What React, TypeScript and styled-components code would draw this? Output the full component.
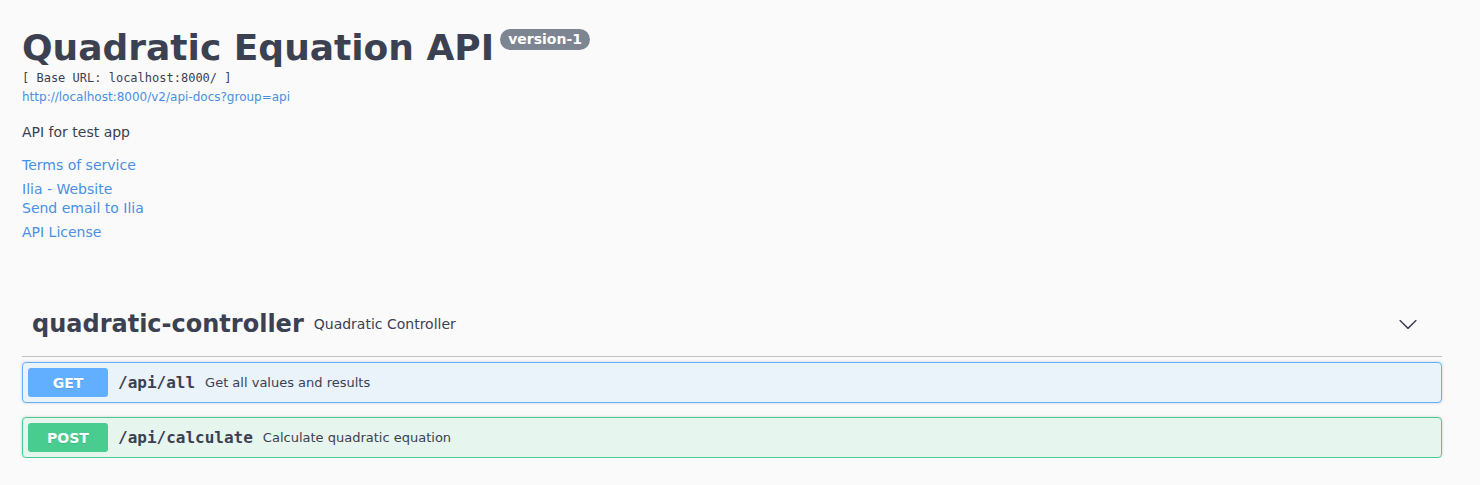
import React from "react";
import styled, { createGlobalStyle } from "styled-components";

const GlobalStyle = createGlobalStyle`
  html, body { margin: 0; padding: 0; background: #fafafa; }
  body { font-family: "DejaVu Sans", sans-serif; color: #3b4151; }
  * { box-sizing: border-box; }
`;

const Wrapper = styled.div`
  width: 1420px;
  margin-left: 22px;
  padding-top: 27px;
`;

const Info = styled.section`
  display: flex;
  flex-direction: column;
  align-items: flex-start;
`;

const TitleRow = styled.div`
  display: flex;
  align-items: flex-start;
`;

const Title = styled.h2`
  margin: 0;
  font-size: 36px;
  line-height: 42px;
  font-weight: 700;
  color: #3b4151;
  font-family: "DejaVu Sans", sans-serif;
`;

const Version = styled.small`
  display: inline-flex;
  align-items: center;
  height: 21px;
  margin: 2px 0 0 6px;
  padding: 0 8px;
  border-radius: 57px;
  background: #7d8492;
  color: #fff;
  font-size: 14px;
  line-height: 17px;
  font-weight: 700;
`;

const BaseUrl = styled.div`
  margin-top: 2px;
  font-family: "DejaVu Sans Mono", monospace;
  font-size: 12px;
  line-height: 14px;
  color: #3b4151;
`;

const Link = styled.a<{ $size?: number; $mt?: number; $lh?: number }>`
  display: block;
  margin-top: ${(p) => p.$mt ?? 0}px;
  font-size: ${(p) => p.$size ?? 14}px;
  line-height: ${(p) => p.$lh ?? 20}px;
  color: #4990e2;
  text-decoration: none;
  font-family: "DejaVu Sans", sans-serif;
`;

const Description = styled.p`
  margin: 18px 0 0;
  font-size: 14px;
  line-height: 20px;
`;

const TagSection = styled.div`
  margin-top: 59px;
`;

const Tag = styled.div`
  display: flex;
  align-items: center;
  padding: 8px 24px 17px 10px;
  border-bottom: 1px solid rgba(59, 65, 81, 0.3);
`;

const TagName = styled.h3`
  margin: 0;
  font-size: 24px;
  line-height: 30px;
  font-weight: 700;
  color: #3b4151;
`;

const TagDesc = styled.small`
  flex: 1;
  margin-left: 10px;
  font-size: 14px;
  line-height: 20px;
  color: #3b4151;
`;

const Arrow = styled.svg`
  width: 20px;
  height: 20px;
  fill: #3b4151;
`;

const Ops = styled.div`
  display: flex;
  flex-direction: column;
  gap: 14px;
  margin-top: 5px;
`;

const Op = styled.div<{ $color: string; $bg: string }>`
  display: flex;
  align-items: center;
  padding: 5px;
  border: 1px solid ${(p) => p.$color};
  background: ${(p) => p.$bg};
  border-radius: 4px;
  box-shadow: 0 0 3px rgba(0, 0, 0, 0.19);
`;

const Method = styled.span<{ $color: string }>`
  width: 80px;
  height: 29px;
  display: flex;
  align-items: center;
  justify-content: center;
  border-radius: 3px;
  background: ${(p) => p.$color};
  color: #fff;
  font-size: 14px;
  font-weight: 700;
  text-shadow: 0 1px 0 rgba(0, 0, 0, 0.1);
`;

const Path = styled.span`
  padding: 0 10px;
  font-family: "DejaVu Sans Mono", monospace;
  font-size: 16px;
  font-weight: 700;
  color: #3b4151;
`;

const OpDesc = styled.span`
  font-size: 13px;
  color: #3b4151;
`;

export default function App() {
  return (
    <>
      <GlobalStyle />
      <Wrapper>
        <Info>
          <TitleRow>
            <Title>Quadratic Equation API</Title>
            <Version>version-1</Version>
          </TitleRow>
          <BaseUrl>[ Base URL: localhost:8000/ ]</BaseUrl>
          <Link $size={12} $lh={14} $mt={5} href="#">
            http://localhost:8000/v2/api-docs?group=api
          </Link>
          <Description>API for test app</Description>
          <Link $mt={13} href="#">Terms of service</Link>
          <Link $mt={5} $lh={18} href="#">Ilia - Website</Link>
          <Link $lh={20} href="#">Send email to Ilia</Link>
          <Link $mt={4} href="#">API License</Link>
        </Info>
        <TagSection>
          <Tag>
            <TagName>quadratic-controller</TagName>
            <TagDesc>Quadratic Controller</TagDesc>
            <Arrow viewBox="0 0 20 20">
              <path d="M17.418 6.109c.272-.268.709-.268.979 0s.271.701 0 .969l-7.908 7.83c-.27.268-.707.268-.979 0l-7.908-7.83c-.27-.268-.27-.701 0-.969.271-.268.709-.268.979 0L10 13.25l7.418-7.141z" />
            </Arrow>
          </Tag>
          <Ops>
            <Op $color="#61affe" $bg="rgba(97,175,254,.1)">
              <Method $color="#61affe">GET</Method>
              <Path>/api/all</Path>
              <OpDesc>Get all values and results</OpDesc>
            </Op>
            <Op $color="#49cc90" $bg="rgba(73,204,144,.1)">
              <Method $color="#49cc90">POST</Method>
              <Path>/api/calculate</Path>
              <OpDesc>Calculate quadratic equation</OpDesc>
            </Op>
          </Ops>
        </TagSection>
      </Wrapper>
    </>
  );
}
